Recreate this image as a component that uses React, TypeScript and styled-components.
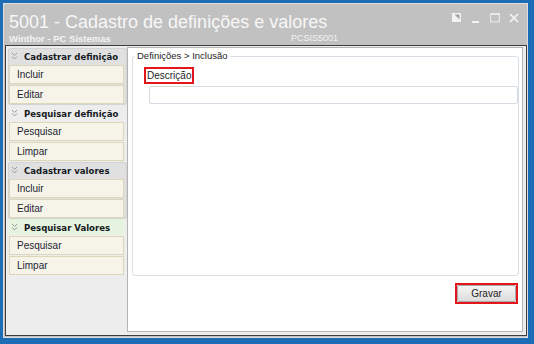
import React from "react";
import styled, { createGlobalStyle } from "styled-components";

const GlobalStyle = createGlobalStyle`
  html, body { margin: 0; padding: 0; }
  body {
    width: 534px;
    height: 344px;
    overflow: hidden;
    font-family: "Liberation Sans", Arial, sans-serif;
  }
  * { box-sizing: border-box; }
`;

const Window = styled.div`
  width: 534px;
  height: 344px;
  background: #1c6db5;
  padding: 3px 6px 6px 3px;
  display: flex;
`;

const Frame = styled.div`
  flex: 1;
  display: flex;
  flex-direction: column;
  background: #c1c1c1;
  border: 1px solid #dedede;
`;

const TitleBar = styled.div`
  height: 41px;
  padding: 8px 8px 0 5px;
  display: flex;
  justify-content: space-between;
  align-items: flex-start;
`;

const Title = styled.div`
  font-size: 18px;
  line-height: 20px;
  color: #f7f7f7;
`;

const SubRow = styled.div`
  display: flex;
  margin-top: 1px;
  line-height: 11px;
  color: #f3f3f3;
`;

const AppName = styled.span`
  width: 282px;
  font-size: 9.5px;
  font-weight: bold;
`;

const Code = styled.span`
  font-size: 9px;
`;

const Controls = styled.div`
  display: flex;
  gap: 9px;
  margin-top: 1px;
`;

const Client = styled.div`
  flex: 1;
  margin: 0 0 1px 1px;
  border: 1px solid #3d3d3d;
  background: #ededed;
  padding: 1px 3px 3px 2px;
  display: flex;
`;

const Sidebar = styled.div`
  width: 119px;
  padding-top: 1px;
  display: flex;
  flex-direction: column;
`;

const Group = styled.div<{ $shaded?: boolean }>`
  padding: 0 3px 1px 1px;
  border-radius: 3px;
  background: ${(p) => (p.$shaded ? "#e0e0e0" : "transparent")};
  box-shadow: ${(p) => (p.$shaded ? "inset 0 0 0 1px #d3d3d3" : "none")};
`;

const Header = styled.div<{ $green?: boolean }>`
  height: 16px;
  display: flex;
  align-items: center;
  gap: 6px;
  padding-left: 2px;
  background: ${(p) => (p.$green ? "#e5f3df" : "transparent")};
  font-family: "DejaVu Sans Condensed", "Liberation Sans", sans-serif;
  font-size: 9.5px;
  font-weight: bold;
  color: #151a22;
  white-space: nowrap;
`;

const Item = styled.div`
  height: 19px;
  margin-top: 1px;
  padding-left: 7px;
  display: flex;
  align-items: center;
  background: #f6f4e8;
  border: 1px solid #ddd7b9;
  font-size: 10px;
  color: #1d2433;
`;

const Panel = styled.div`
  flex: 1;
  background: #fff;
  border: 1px solid #b4b4b4;
  display: flex;
  flex-direction: column;
  padding: 0 3px 0 4px;
`;

const Fieldset = styled.fieldset`
  flex: 1;
  min-width: 0;
  margin: 2px 0 0 0;
  padding: 0;
  border: 1px solid #d9dfe6;
  border-radius: 3px;
  display: flex;
  flex-direction: column;
  align-items: flex-start;
`;

const Legend = styled.legend`
  margin-left: 2px;
  padding: 0 2px;
  font-size: 9.5px;
  line-height: 12px;
  color: #1e1e1e;
`;

const FieldLabel = styled.div`
  margin: 5px 0 0 11px;
  padding: 0 1px;
  border: 2px solid #e3161c;
  font-size: 10px;
  line-height: 13px;
  color: #1e1e1e;
`;

const TextInput = styled.div`
  align-self: stretch;
  height: 18px;
  margin: 2px 0 0 16px;
  border: 1px solid #d5dbe2;
  border-radius: 2px;
  background: #fff;
`;

const Footer = styled.div`
  height: 55px;
  padding: 7px 1px 0 0;
  display: flex;
  justify-content: flex-end;
  align-items: flex-start;
`;

const RedFrame = styled.div`
  border: 2px solid #e3161c;
`;

const Button = styled.div`
  width: 59px;
  height: 17px;
  display: flex;
  align-items: center;
  justify-content: center;
  border: 1px solid #a9a9a9;
  border-radius: 2px;
  background: linear-gradient(#f5f5f5, #dcdcdc);
  font-size: 10px;
  color: #222;
`;

function Chevrons() {
  return (
    <svg width="7" height="8" viewBox="0 0 7 8">
      <path d="M1 1l2.5 2.5L6 1M1 4.5l2.5 2.5L6 4.5" fill="none" stroke="#9a9a9a" strokeWidth="1" />
    </svg>
  );
}

function WindowControls() {
  return (
    <Controls>
      <svg width="10" height="10" viewBox="0 0 10 10">
        <rect x="0" y="0" width="9" height="9" fill="#f2f2f2" />
        <polygon points="2.5,1.5 7.5,1.5 7.5,6.5" fill="#a4a4a4" />
      </svg>
      <svg width="10" height="10" viewBox="0 0 10 10">
        <rect x="1" y="8" width="7" height="2" fill="#f2f2f2" />
      </svg>
      <svg width="10" height="10" viewBox="0 0 10 10">
        <rect x="0.6" y="1" width="8.8" height="7.8" fill="none" stroke="#e8e8e8" strokeWidth="1.2" />
        <rect x="0" y="0" width="10" height="2" fill="#e8e8e8" />
      </svg>
      <svg width="10" height="10" viewBox="0 0 10 10">
        <path d="M1 1L9 9M9 1L1 9" stroke="#f7f7f7" strokeWidth="1.6" />
      </svg>
    </Controls>
  );
}

const groups = [
  { title: "Cadastrar definição", items: ["Incluir", "Editar"], shaded: true },
  { title: "Pesquisar definição", items: ["Pesquisar", "Limpar"] },
  { title: "Cadastrar valores", items: ["Incluir", "Editar"], shaded: true },
  { title: "Pesquisar Valores", items: ["Pesquisar", "Limpar"], green: true },
];

export default function App() {
  return (
    <>
      <GlobalStyle />
      <Window>
        <Frame>
          <TitleBar>
            <div>
              <Title>5001 - Cadastro de definições e valores</Title>
              <SubRow>
                <AppName>Winthor - PC Sistemas</AppName>
                <Code>PCSIS5001</Code>
              </SubRow>
            </div>
            <WindowControls />
          </TitleBar>
          <Client>
            <Sidebar>
              {groups.map((g) => (
                <Group key={g.title} $shaded={g.shaded}>
                  <Header $green={g.green}>
                    <Chevrons />
                    {g.title}
                  </Header>
                  {g.items.map((it) => (
                    <Item key={it}>{it}</Item>
                  ))}
                </Group>
              ))}
            </Sidebar>
            <Panel>
              <Fieldset>
                <Legend>Definições &gt; Inclusão</Legend>
                <FieldLabel>Descrição</FieldLabel>
                <TextInput />
              </Fieldset>
              <Footer>
                <RedFrame>
                  <Button>Gravar</Button>
                </RedFrame>
              </Footer>
            </Panel>
          </Client>
        </Frame>
      </Window>
    </>
  );
}
